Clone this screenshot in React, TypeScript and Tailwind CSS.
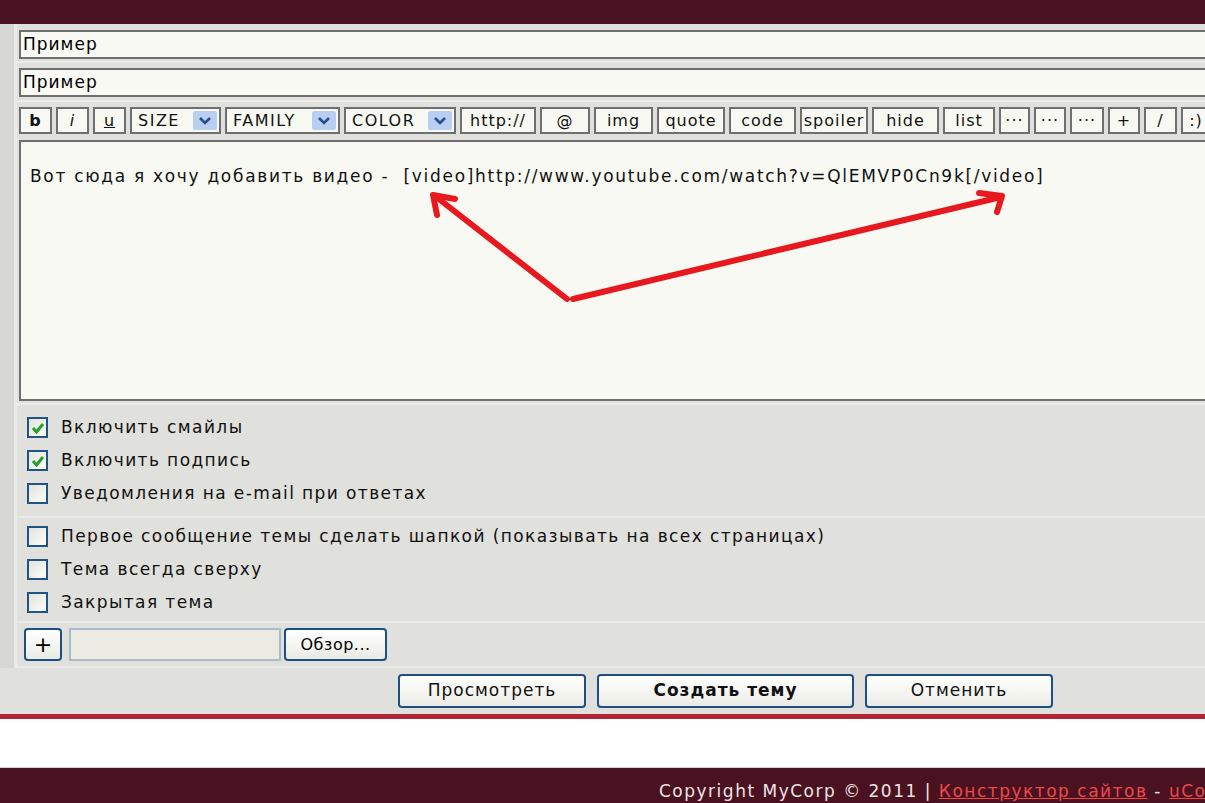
import React from "react";

const tools = ["http://", "@", "img", "quote", "code", "spoiler", "hide", "list", "···", "···", "···", "+", "/", ":)"];
const toolWidths = [76, 50, 59, 68, 67, 68, 67, 52, 31, 32, 34, 32, 33, 30];

const ToolBtn = ({ label, w, className = "" }: { label: string; w: number; className?: string }) => (
    <div
        style={{ width: w }}
        className={"h-[27px] shrink-0 flex items-center justify-center border-2 border-[#6f6f6f] bg-[#f8f9f2] text-[16px] tracking-[1px] text-[#111] " + className}
    >
        {label}
    </div>
);

const Select = ({ label, w }: { label: string; w: number }) => (
    <div style={{ width: w }} className="h-[27px] shrink-0 flex items-center justify-between border-2 border-[#6f6f6f] bg-[#f8f9f2] pl-[6px] pr-[2px]">
        <span className="text-[16px] tracking-[1.5px] text-[#111]">{label}</span>
        <span className="w-[24px] h-[19px] bg-[#b9cff2] rounded-[2px] flex items-center justify-center">
            <svg width="14" height="9" viewBox="0 0 14 9"><path d="M2 2 L7 7 L12 2" fill="none" stroke="#2a4e8c" strokeWidth="2.6" /></svg>
        </span>
    </div>
);

const Check = ({ checked, label }: { checked?: boolean; label: string }) => (
    <div className="h-[33px] flex items-center">
        <span className="w-[21px] h-[21px] ml-[10px] border-2 border-[#1f5487] bg-gradient-to-br from-[#e4e4de] to-[#fbfbf8] flex items-center justify-center">
            {checked && (
                <svg width="14" height="12" viewBox="0 0 14 12"><path d="M2 6 L5.5 10 L12 2" fill="none" stroke="#21a12a" strokeWidth="3" /></svg>
            )}
        </span>
        <span className="ml-[13px] text-[17px] tracking-[1.4px] text-[#111]">{label}</span>
    </div>
);

const Btn = ({ label, w, bold }: { label: string; w: number; bold?: boolean }) => (
    <div
        style={{ width: w }}
        className={"h-[34px] shrink-0 flex items-center justify-center rounded-[4px] border-2 border-[#1d4f84] bg-gradient-to-b from-white to-[#ebebe5] text-[17px] tracking-[1px] text-[#111] " + (bold ? "font-bold" : "")}
    >
        {label}
    </div>
);

const App = () => {
    return (
        <div className="w-[1205px] h-[803px] overflow-hidden bg-white font-['DejaVu_Sans',sans-serif]">
            <div className="h-[24px] bg-[#4a1120]" />
            <div className="w-[1240px] bg-[#e0e0dc] flex">
                <div className="w-[17px] bg-[#d7d7d3] border-r-[3px] border-[#ebebe7]" />
                <div className="flex-1">
                    <div className="h-[39px] pt-[6px] pl-[2px] border-b-2 border-[#ebebe7]">
                        <div className="h-[29px] border-2 border-[#6f6f6f] bg-[#f8f9f2] pl-[2px] flex items-center text-[17px] tracking-[1px]">Пример</div>
                    </div>
                    <div className="h-[39px] pt-[5px] pl-[2px] border-b-2 border-[#ebebe7]">
                        <div className="h-[29px] border-2 border-[#6f6f6f] bg-[#f8f9f2] pl-[2px] flex items-center text-[17px] tracking-[1px]">Пример</div>
                    </div>
                    <div className="pt-[5px] pl-[2px] border-b-2 border-[#ebebe7]">
                        <div className="flex gap-[4px]">
                            <ToolBtn label="b" w={33} className="font-bold" />
                            <ToolBtn label="i" w={33} className="italic" />
                            <ToolBtn label="u" w={33} className="underline" />
                            <Select label="SIZE" w={91} />
                            <Select label="FAMILY" w={115} />
                            <Select label="COLOR" w={112} />
                            {tools.map((t, i) => (
                                <ToolBtn key={i} label={t} w={toolWidths[i]} />
                            ))}
                        </div>
                        <div className="relative mt-[6px] mb-[2px] h-[261px] border-2 border-[#6f6f6f] bg-[#f8f9f2]">
                            <div className="pl-[9px] pt-[22px] text-[17px] tracking-[1.7px] text-[#111] whitespace-pre">
                                {"Вот сюда я хочу добавить видео -  [video]http://www.youtube.com/watch?v=QlEMVP0Cn9k[/video]"}
                            </div>
                            <svg className="absolute left-0 top-0" width="1100" height="260" viewBox="0 0 1100 260">
                                <g fill="none" stroke="#e8191e" strokeWidth="6" strokeLinecap="round" strokeLinejoin="round">
                                    <path d="M546 157 L414 54" />
                                    <path d="M416 73 L412 53 L434 57" />
                                    <path d="M552 157 L980 55" />
                                    <path d="M958 51 L981 54 L976 70" />
                                </g>
                            </svg>
                        </div>
                    </div>
                    <div className="pt-[6px] pb-[6px] border-b-2 border-[#ebebe7]">
                        <Check checked label="Включить смайлы" />
                        <Check checked label="Включить подпись" />
                        <Check label="Уведомления на e-mail при ответах" />
                    </div>
                    <div className="pt-[2px] pb-[2px] border-b-2 border-[#ebebe7]">
                        <Check label="Первое сообщение темы сделать шапкой (показывать на всех страницах)" />
                        <Check label="Тема всегда сверху" />
                        <Check label="Закрытая тема" />
                    </div>
                    <div className="h-[45px] flex items-center pl-[7px] border-b-2 border-[#ebebe7]">
                        <div className="w-[38px] h-[33px] rounded-[4px] border-2 border-[#1d4f84] bg-gradient-to-b from-white to-[#ebebe5] flex items-center justify-center text-[22px] leading-none">+</div>
                        <div className="ml-[7px] w-[212px] h-[33px] border-2 border-[#a9bccc] bg-[#ebebe4]" />
                        <div className="ml-[3px] w-[103px] h-[33px] rounded-[4px] border-2 border-[#1d4f84] bg-gradient-to-b from-white to-[#ebebe5] flex items-center justify-center text-[16px] tracking-[0.5px]">Обзор...</div>
                    </div>
                </div>
            </div>
            <div className="w-[1205px] h-[46px] bg-[#e0e0dc] flex items-center pl-[398px] gap-[11px]">
                <Btn label="Просмотреть" w={188} />
                <Btn label="Создать тему" w={257} bold />
                <Btn label="Отменить" w={188} />
            </div>
            <div className="h-[5px] bg-[#b12535]" />
            <div className="h-[49px] bg-white border-b border-[#d8d0d0]" />
            <div className="h-[35px] bg-[#4a1120] pl-[659px] pt-[13px] leading-[20px] whitespace-nowrap text-[17px] tracking-[1.5px] text-[#ece4e4]">
                Copyright MyCorp © 2011 | <span className="text-[#f04848] underline">Конструктор сайтов</span> - <span className="text-[#f04848] underline">uCoz</span>
            </div>
        </div>
    );
};

export default App;
